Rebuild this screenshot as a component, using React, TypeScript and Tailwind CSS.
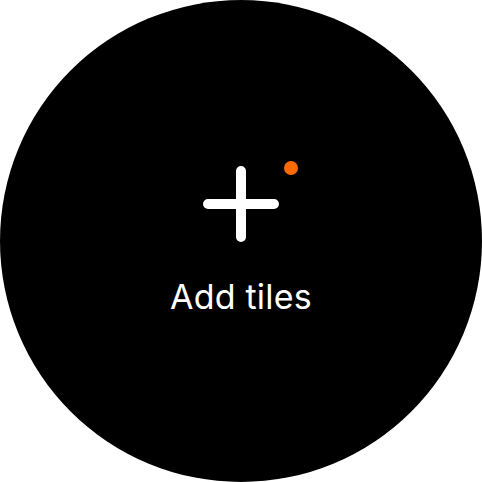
import React from 'react'

const App: React.FC = () => {
    return (
        <div className="w-[482px] h-[482px] bg-white">
            <div className="w-full h-full rounded-full bg-black flex flex-col items-center justify-center">
                <div className="relative w-[76px] h-[76px]">
                    <svg width="76" height="76" viewBox="0 0 76 76" fill="none">
                        <path d="M38 5V71M5 38H71" stroke="white" strokeWidth="10" strokeLinecap="round" />
                    </svg>
                    <div className="absolute left-[81px] top-[-5px] w-[14px] h-[14px] rounded-full bg-[#ff6a00]" />
                </div>
                <div
                    className="mt-[35px] text-white text-[34px] leading-[40px] tracking-[0.2px]"
                    style={{ fontFamily: 'Inter, "Noto Sans", sans-serif' }}
                >
                    Add tiles
                </div>
            </div>
        </div>
    )
}

export default App
